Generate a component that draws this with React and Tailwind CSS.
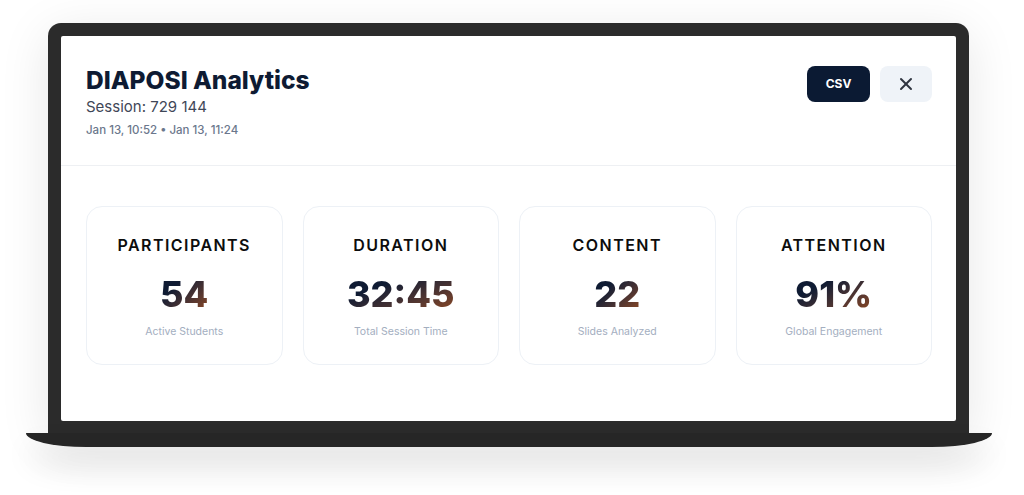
import React from "react";
import { X } from "lucide-react";

const stats = [
  { label: "PARTICIPANTS", value: "54", sub: "Active Students" },
  { label: "DURATION", value: "32:45", sub: "Total Session Time" },
  { label: "CONTENT", value: "22", sub: "Slides Analyzed" },
  { label: "ATTENTION", value: "91%", sub: "Global Engagement" },
];

export default function App() {
  return (
    <div
      className="w-[1024px] h-[495px] bg-white overflow-hidden pt-[23px] pl-[26px]"
      style={{ fontFamily: "Inter, 'Noto Sans', sans-serif" }}
    >
      <div className="flex flex-col w-[966px]">
        <div className="ml-[22px] w-[921px] bg-[#2b2b2b] rounded-t-[13px] px-[13px] pt-[13px] pb-[12px] shadow-[0_10px_50px_rgba(0,0,0,0.10)]">
          <div className="bg-white h-[385px] rounded-[2px] flex flex-col">
            <div className="flex items-start justify-between pl-[25px] pr-[24px] pt-[30px] pb-[27px] border-b border-[#eef0f3]">
              <div className="flex flex-col">
                <h1 className="text-[24.5px] leading-7 font-extrabold text-[#0e1b33]">
                  DIAPOSI Analytics
                </h1>
                <div className="mt-[3px] text-[15px] leading-5 text-[#3f4757]">Session: 729 144</div>
                <div className="mt-[5px] text-[11.5px] leading-4 font-medium text-[#6b778c]">
                  Jan 13, 10:52 • Jan 13, 11:24
                </div>
              </div>
              <div className="flex items-center gap-[10px]">
                <button className="w-[63px] h-9 rounded-lg bg-[#0b1a33] text-white text-[12px] font-bold flex items-center justify-center">
                  CSV
                </button>
                <button className="w-[52px] h-9 rounded-lg bg-[#eff3f8] text-[#2f3540] flex items-center justify-center">
                  <X size={20} strokeWidth={2.4} />
                </button>
              </div>
            </div>
            <div className="grid grid-cols-4 gap-5 pl-[25px] pr-[24px] pt-10">
              {stats.map((s) => (
                <div
                  key={s.label}
                  className="h-[159px] rounded-2xl border border-[#edf1f6] flex flex-col items-center pt-[26px]"
                >
                  <div className="text-[16px] leading-6 font-semibold tracking-[0.09em] text-[#0d0d0d]">
                    {s.label}
                  </div>
                  <div className="mt-[17px] text-[36px] leading-10 font-extrabold bg-linear-to-br from-[#0f1b33] from-30% to-[#94491a] bg-clip-text text-transparent">
                    {s.value}
                  </div>
                  <div className="mt-[10px] text-[10.5px] leading-4 text-[#a3aec0]">{s.sub}</div>
                </div>
              ))}
            </div>
          </div>
        </div>
        <div className="w-[966px] h-[14px] bg-[#262626] rounded-b-[60px_14px] shadow-[0_18px_30px_rgba(0,0,0,0.14)]"></div>
      </div>
    </div>
  );
}
